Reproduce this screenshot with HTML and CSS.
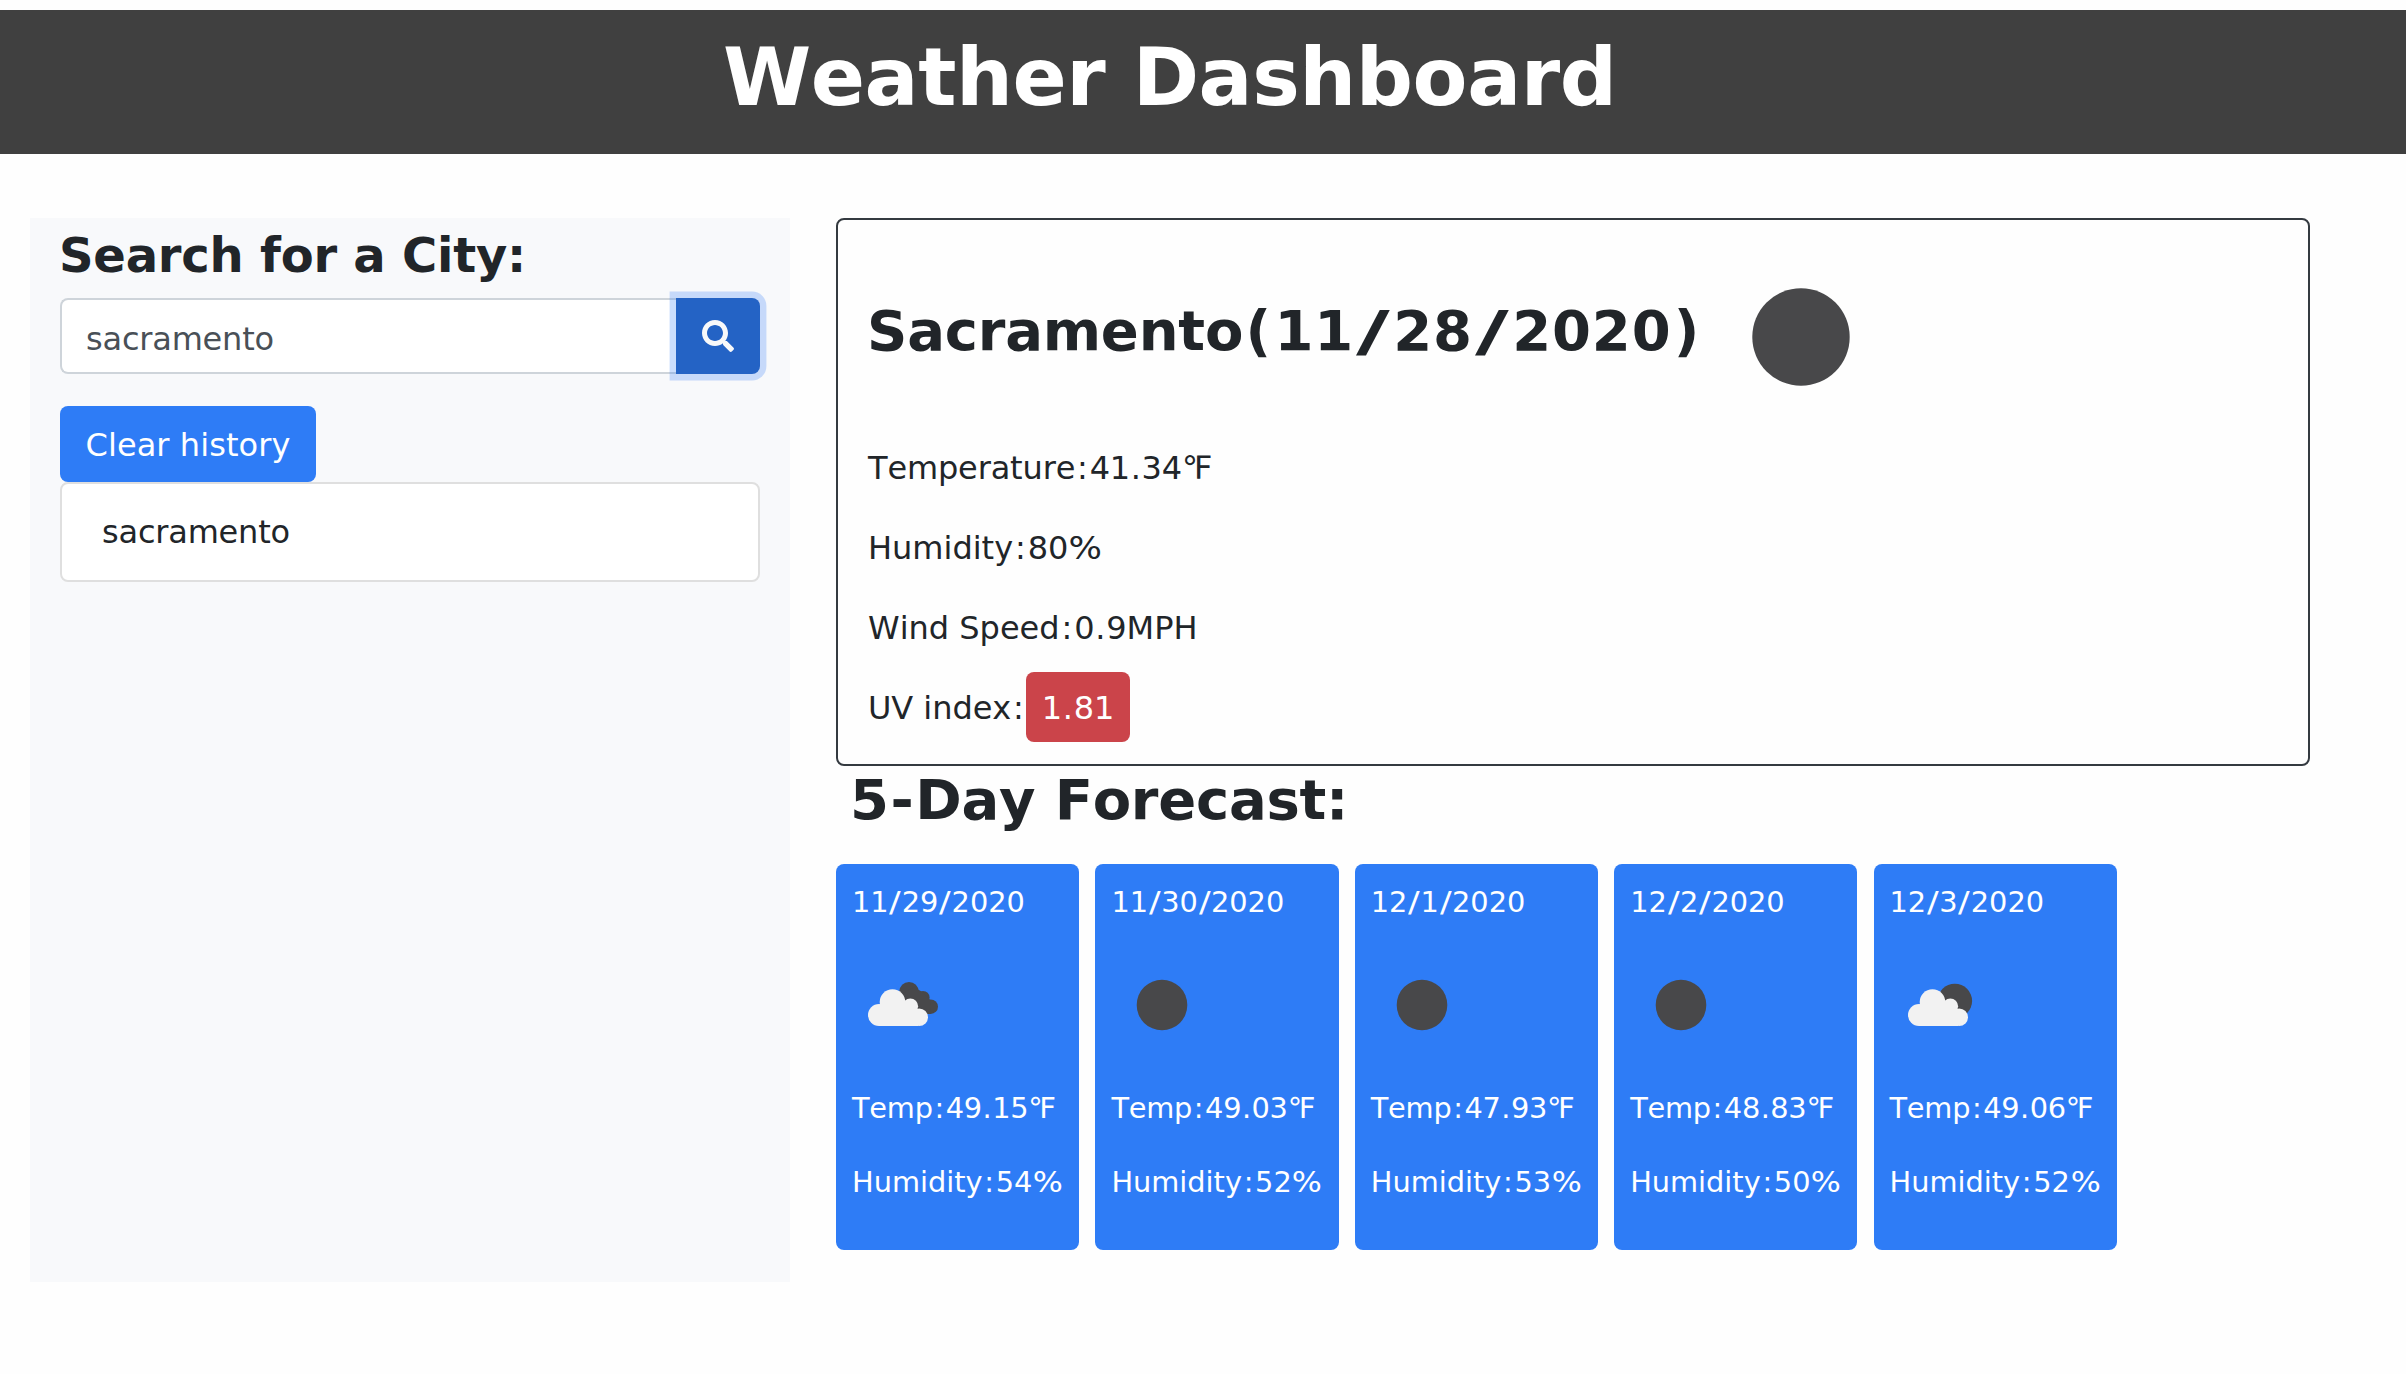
FILE: index.html
```html
<!DOCTYPE html>
<html lang="en">
<head>
<meta charset="utf-8">
<title>Weather Dashboard</title>
<link rel="stylesheet" href="styles.css">
</head>
<body>
<svg class="defs" aria-hidden="true">
  <symbol id="moon" viewBox="0 0 100 100"><circle cx="51" cy="50" r="25.3" fill="#48484a"/></symbol>
  <symbol id="cloud" viewBox="0 0 100 100">
    <g fill="#f2f2f2">
      <circle cx="29" cy="60" r="11"/><circle cx="42.5" cy="47" r="12.8"/>
      <circle cx="60.3" cy="51.3" r="7.8"/><circle cx="69.2" cy="62.2" r="8.8"/>
      <path d="M29 50L42 46L60 50L68 60V71H29Z"/>
    </g>
  </symbol>
  <symbol id="broken" viewBox="0 0 100 100">
    <g fill="#48484a">
      <circle cx="57" cy="36.7" r="9.7"/><circle cx="71" cy="42.5" r="6.6"/><circle cx="78.7" cy="51.7" r="7.3"/>
      <path d="M48 40L62 32L72 38L79 46L78.7 59H60Z"/>
    </g>
    <use href="#cloud" x="-2" width="100" height="100"/>
  </symbol>
  <symbol id="few" viewBox="0 0 100 100">
    <circle cx="64.8" cy="46" r="17.3" fill="#48484a"/>
    <use href="#cloud" width="100" height="100"/>
  </symbol>
</svg>

<header class="header"><h1 class="title">Weather Dashboard</h1></header>

<main class="main">
  <aside class="sidebar">
    <h3 class="search-title">Search for a City:</h3>
    <div class="search">
      <div class="search-input">sacramento</div>
      <button class="search-btn" aria-label="Search">
        <svg viewBox="0 0 512 512" width="32" height="32"><path fill="#f8f9fa" d="M505 442.7L405.3 343c-4.500-4.500-10.600-7-17-7H372c27.600-35.300 44-79.700 44-128C416 93.100 322.900 0 208 0S0 93.100 0 208s93.100 208 208 208c48.300 0 92.700-16.400 128-44v16.300c0 6.400 2.500 12.500 7 17l99.700 99.700c9.400 9.400 24.600 9.400 33.900 0l28.300-28.300c9.400-9.400 9.400-24.600.1-34zM208 336c-70.700 0-128-57.200-128-128 0-70.700 57.200-128 128-128 70.700 0 128 57.200 128 128 0 70.700-57.200 128-128 128z"/></svg>
      </button>
    </div>
    <button class="clear">Clear history</button>
    <div class="history">sacramento</div>
  </aside>

  <section class="content">
    <div class="current">
      <div class="current-head">
        <h2 class="city">Sacramento<span class="date"><span class="paren">(</span>11<span class="sl">/</span>28<span class="sl">/</span>2020<span class="paren">)</span></span></h2>
        <svg class="moon" viewBox="0 0 98 98"><circle cx="49" cy="49" r="48.700" fill="#48484a"/></svg>
      </div>
      <p class="stat temp">Temperature<span class="c">:</span>41<span class="d">.</span>34℉</p>
      <p class="stat">Humidity<span class="c">:</span>80<span class="pct">%</span></p>
      <p class="stat wind">Wind Speed<span class="c">:</span>0<span class="d">.</span>9MPH</p>
      <p class="stat uv">UV index<span class="c">:</span><span class="badge">1<span class="d">.</span>81</span></p>
    </div>
    <h2 class="forecast-title">5<span class="hy">-</span>Day Forecast:</h2>
    <div class="forecast">
      <div class="day">
        <p>11<span class="s">/</span>29<span class="s">/</span>2020</p>
        <svg class="icon"><use href="#broken"/></svg>
        <p class="temp">Temp<span class="c">:</span>49<span class="d">.</span>15℉</p>
        <p>Humidity<span class="c">:</span>54<span class="pct">%</span></p>
      </div>
      <div class="day">
        <p>11<span class="s">/</span>30<span class="s">/</span>2020</p>
        <svg class="icon"><use href="#moon"/></svg>
        <p class="temp">Temp<span class="c">:</span>49<span class="d">.</span>03℉</p>
        <p>Humidity<span class="c">:</span>52<span class="pct">%</span></p>
      </div>
      <div class="day">
        <p>12<span class="s">/</span>1<span class="s">/</span>2020</p>
        <svg class="icon"><use href="#moon"/></svg>
        <p class="temp">Temp<span class="c">:</span>47<span class="d">.</span>93℉</p>
        <p>Humidity<span class="c">:</span>53<span class="pct">%</span></p>
      </div>
      <div class="day">
        <p>12<span class="s">/</span>2<span class="s">/</span>2020</p>
        <svg class="icon"><use href="#moon"/></svg>
        <p class="temp">Temp<span class="c">:</span>48<span class="d">.</span>83℉</p>
        <p>Humidity<span class="c">:</span>50<span class="pct">%</span></p>
      </div>
      <div class="day">
        <p>12<span class="s">/</span>3<span class="s">/</span>2020</p>
        <svg class="icon"><use href="#few"/></svg>
        <p class="temp">Temp<span class="c">:</span>49<span class="d">.</span>06℉</p>
        <p>Humidity<span class="c">:</span>52<span class="pct">%</span></p>
      </div>
    </div>
  </section>
</main>
</body>
</html>
```
FILE: styles.css
```css
* { box-sizing: border-box; }
body {
  margin: 0;
  padding-top: 10px;
  min-height: 1374px;
  background: #fefefe;
  color: #212529;
  font: 32px/48px Verdana, "DejaVu Sans", sans-serif;
  font-kerning: none;
}
h1, h2, h3, p { margin: 0; }
button { font: inherit; border: 0; }
svg { display: block; flex: none; }
.defs { width: 0; height: 0; position: absolute; }

.header {
  height: 144px;
  padding: 20px 0 0 723px;
  background: #404040;
}
.title {
  color: #fff;
  font-size: 80px;
  line-height: 96px;
  letter-spacing: -0.45px;
}

.main {
  display: flex;
  align-items: flex-start;
  gap: 46px;
  padding: 64px 96px 0 30px;
}

.sidebar {
  width: 760px;
  height: 1064px;
  padding: 8px 30px 0;
  background: #f8f9fb;
}
.search-title {
  margin: 0 0 14px -1px;
  font-size: 48px;
  line-height: 58px;
  letter-spacing: -0.22px;
}
.search { display: flex; height: 76px; margin-bottom: 32px; }
.search-input {
  flex: 1;
  padding: 15px 24px 0;
  border: 2px solid #ced4da;
  border-right: 0;
  border-radius: 8px 0 0 8px;
  background: #fff;
  color: #495057;
  letter-spacing: -0.2px;
}
.search-btn {
  display: flex;
  align-items: center;
  justify-content: center;
  width: 84px;
  padding: 0;
  border-radius: 0 8px 8px 0;
  background: #2463c5;
  box-shadow: 0 0 0 6.4px rgba(46, 124, 246, .25);
  z-index: 1;
}
.clear {
  display: block;
  width: 256px;
  height: 76px;
  padding: 1px 0 0;
  border-radius: 8px;
  background: #2e7cf6;
  color: #fff;
  letter-spacing: 0.08px;
}
.history {
  height: 100px;
  padding: 24px 40px 0;
  border: 2px solid #dfdfdf;
  border-radius: 8px;
  background: #fff;
  letter-spacing: -0.2px;
}

.content { width: 1474px; }
.current {
  height: 548px;
  padding: 68px 30px 0;
  border: 2px solid #343a40;
  border-radius: 8px;
}
.current-head {
  display: flex;
  align-items: center;
  height: 98px;
  margin-bottom: 58px;
}
.city {
  width: 885px;
  padding: 0 0 13px;
  margin-left: -1px;
  font-size: 56px;
  line-height: 67px;
  letter-spacing: -0.2px;
  white-space: nowrap;
}
.date { letter-spacing: 0.84px; }
.paren { padding: 0 2.4px; }
.sl { display: inline-block; margin: 0 9px; transform: scaleX(1.65); }
.moon { width: 98px; height: 98px; }

.stat { margin-bottom: 32px; white-space: nowrap; }
.temp { letter-spacing: -0.15px; }
.wind { letter-spacing: 0; }
.uv { letter-spacing: -0.05px; }
.c { padding: 0 .06em; }
.s { display: inline-block; margin: 0 .06em; transform: scaleX(1.2); }
.d { padding: 0 .023em; }
.hy { padding: 0 .032em; }
.pct { display: inline-block; margin: 0 .06em; transform: scaleX(1.1); }
.badge {
  padding: 17px 16px 15px;
  border-radius: 8px;
  background: #cb444a;
  color: #fff;
}

.forecast-title {
  margin: 0 0 30px;
  padding-left: 14px;
  font-size: 56px;
  line-height: 68px;
  letter-spacing: -0.24px;
}
.forecast {
  display: grid;
  grid-template-columns: repeat(5, 243.2px);
  gap: 16.2px;
}
.day {
  height: 386px;
  padding: 16px 16px 0;
  border-radius: 8px;
  background: #2e7cf6;
  color: #fff;
  font-size: 28.8px;
  line-height: 44px;
  white-space: nowrap;
}
.day .temp { margin-bottom: 30px; letter-spacing: -0.22px; }
.icon { width: 100px; height: 100px; margin: 31px 0; }
```
